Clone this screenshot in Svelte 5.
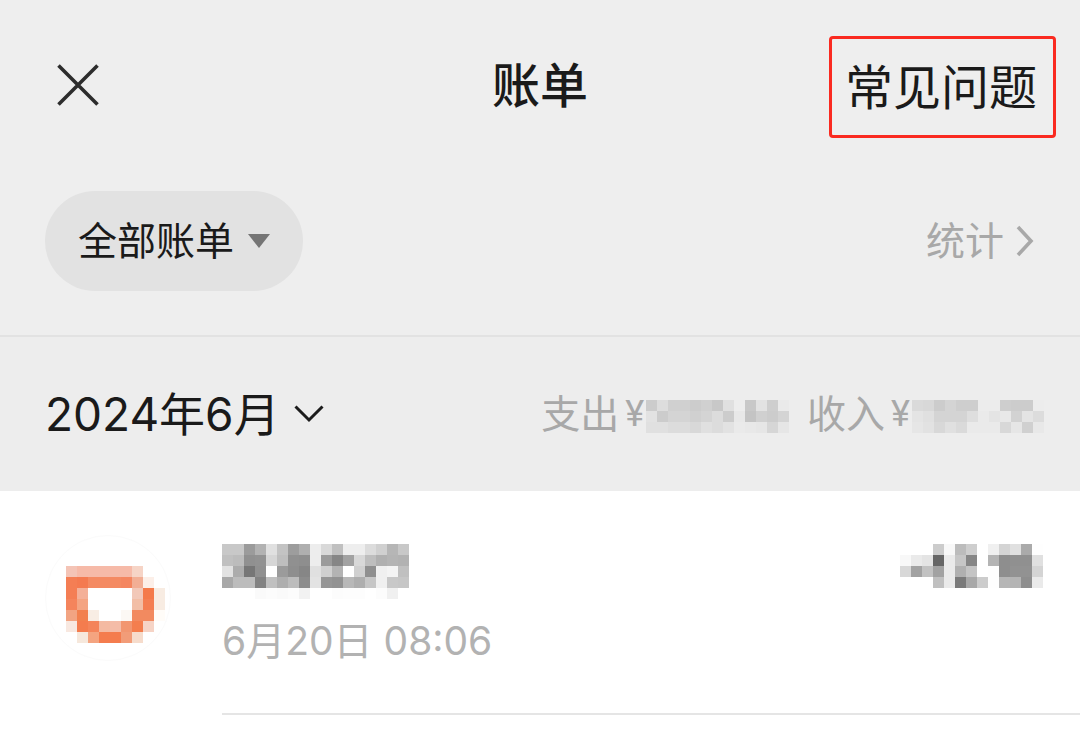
<script>
	let filter = 'all';
	let month = '2024-06';

	const CELL = 11;

	// masked values, one colour per cell, "." is an empty cell
	const expense = [
		'ccc ddd d0d0d0 d0d0d0 ccc d0d0d0 c8c8c8 e0e0e0 . c8c8c8 e2e2e2 cecece eaeaea',
		'e2e2e2 ccc d4d4d4 d4d4d4 d0d0d0 d4d4d4 dcdcdc ccc e8e8e8 c4c4c4 d0d0d0 ccc d4d4d4',
		'e0e0e0 e0e0e0 dcdcdc dcdcdc d8d8d8 e0e0e0 dcdcdc e2e2e2 eaeaea e8e8e8 e6e6e6 d6d6d6 e6e6e6'
	];
	const income = [
		'dadada d8d8d8 ccc d4d4d4 cecece cecece ececec ececec cecece ccc ccc ececec',
		'e4e4e4 e0e0e0 d4d4d4 d4d4d4 d4d4d4 dedede eaeaea e4e4e4 e8e8e8 d2d2d2 e4e4e4 dcdcdc',
		'e6e6e6 e2e2e2 d8d8d8 e0e0e0 dadada eaeaea eaeaea eaeaea d8d8d8 e6e6e6 d0d0d0 e8e8e8'
	];
	const payee = [
		'c8c8c8 c8c8c8 9b9b9b b2b2b2 e0e0e0 c3c3c3 9d9d9d afafaf ededed d9d9d9 c0c0c0 eee eee dcdcdc d0d0d0 b6b6b6 c8c8c8',
		'c0c0c0 bcbcbc 909090 929292 d6d6d6 bebebe 909090 8e8e8e ededed 9b9b9b 868686 a2a2a2 d8d8d8 bebebe b0b0b0 b4b4b4 b2b2b2',
		'e2e2e2 acacac 767676 909090 . 9b9b9b 8e8e8e 868686 e0e0e0 d0d0d0 b3b3b3 . d0d0d0 8f8f8f f0f0f0 f4f4f4 c0c0c0',
		'a8a8a8 bcbcbc bcbcbc 828282 c0c0c0 aeaeae bcbcbc 8c8c8c e3e3e3 969696 929292 b8b8b8 aeaeae c6c6c6 f0f0f0 c8c8c8 c6c6c6',
		'. . . fafafa fcfcfc fafafa fcfcfc f2f2f2 . . fcfcfc fdfdfd fdfdfd . fcfcfc f0f0f0 .'
	];
	const amount = [
		'. . . ccc f8f8f8 bcbcbc cecece . f0f0f0 d4d4d4 e0e0e0 aaa fefefe',
		'f8f8f8 eaeaea e4e4e4 666 eaeaea c6c6c6 868686 . b4b4b4 8e8e8e 909090 909090 e0e0e0',
		'd8d8d8 a2a2a2 c2c2c2 a2a2a2 eaeaea b0b0b0 c4c4c4 . fefefe 8e8e8e 929292 929292 d4d4d4',
		'. . . c0c0c0 eaeaea 7a7a7a a8a8a8 ccc fefefe b6b6b6 b4b4b4 8e8e8e eaeaea'
	];
	const logo = [
		'f4c4b6 f6baa8 f6baa8 f6baa8 f6baa8 f6baa8 f6d4c6 . .',
		'f47e54 f47a50 f48a62 f48a62 f48a62 f48660 f2ae94 fcefe8 .',
		'f47e54 f4b098 . . . . f2c8b8 f47a4a f8ece2',
		'f4845c f4a482 . . . . f2bea6 f47e52 f8ece2',
		'f2a482 f2804e f8ede4 . . fcf8f4 f28a60 f28a60 fffcf8',
		'f8e8e0 f47c4e f4845a f4baa2 f4bca8 f29670 f47e4e f6d4c6 .',
		'. f6e8dc f4a480 f47c4e f47c4e f29c78 f6dccc . .'
	];

	function toCells(rows) {
		return rows.flatMap((row, y) =>
			row
				.split(' ')
				.map((color, x) => ({ x: x * CELL, y: y * CELL, color }))
				.filter((cell) => cell.color !== '.')
		);
	}

	function width(rows) {
		return rows[0].split(' ').length * CELL;
	}
</script>

{#snippet mosaic(rows)}
	<svg class="mosaic" width={width(rows)} height={rows.length * CELL} aria-hidden="true">
		{#each toCells(rows) as cell}
			<rect x={cell.x} y={cell.y} width={CELL} height={CELL} fill="#{cell.color}" />
		{/each}
	</svg>
{/snippet}

<div class="page">
	<div class="top">
		<header class="nav">
			<button class="close" aria-label="关闭">
				<svg width="42" height="42" viewBox="0 0 42 42">
					<path d="M1.5 1.5 40.5 40.5M40.5 1.5 1.5 40.5" fill="none" stroke="#2c2c2c" stroke-width="3.6" />
				</svg>
			</button>
			<h1>账单</h1>
			<a class="faq" href="#faq">常见问题</a>
		</header>

		<div class="filters">
			<div class="picker">
				<select class="type" bind:value={filter} aria-label="账单类型">
					<option value="all">全部账单</option>
				</select>
				<svg class="caret" width="22" height="14" viewBox="0 0 22 14">
					<path d="M0 0H22L11 14Z" fill="#757575" />
				</svg>
			</div>
			<a class="stats" href="#stats">
				<span class="label">统计</span>
				<svg width="18" height="32" viewBox="0 0 18 32">
					<path d="M2 2 15 16 2 30" fill="none" stroke="#a8a8a8" stroke-width="3.6" />
				</svg>
			</a>
		</div>
	</div>

	<div class="summary">
		<div class="picker">
			<select class="month" bind:value={month} aria-label="月份">
				<option value="2024-06">2024年6月</option>
			</select>
			<svg class="chevron" width="30" height="18" viewBox="0 0 30 18">
				<path d="M1.5 1.5 15 15 28.5 1.5" fill="none" stroke="#1c1c1c" stroke-width="3" />
			</svg>
		</div>
		<div class="totals">
			<span class="total"><span class="label">支出</span><span class="yen">¥</span>{@render mosaic(expense)}</span>
			<span class="total"><span class="label">收入</span><span class="yen">¥</span>{@render mosaic(income)}</span>
		</div>
	</div>

	<ul class="bills">
		<li class="bill">
			<div class="logo">{@render mosaic(logo)}</div>
			<div class="detail">
				<div class="line">
					{@render mosaic(payee)}
					{@render mosaic(amount)}
				</div>
				<time datetime="2024-06-20T08:06">6月20日 08:06</time>
			</div>
		</li>
	</ul>
</div>

<style>
	:global(body) {
		background: #fff;
	}
	.page {
		font-family: Roboto, 'Noto Sans CJK SC', sans-serif;
		color: #1a1a1a;
	}
	svg {
		display: block;
		flex: none;
	}
	a {
		color: inherit;
		text-decoration: none;
	}
	button,
	select {
		appearance: none;
		margin: 0;
		padding: 0;
		border: none;
		background: none;
		font-family: inherit;
		color: inherit;
		cursor: pointer;
	}
	.top {
		padding: 36px 24px 44px;
		background: #eee;
		border-bottom: 2px solid #e2e2e2;
	}
	.nav {
		display: grid;
		grid-template-columns: 1fr auto 1fr;
		align-items: center;
	}
	.close {
		justify-self: start;
		margin: 0 0 4px 33px;
	}
	h1 {
		margin: 0;
		font-size: 48px;
		font-weight: 500;
		line-height: 72px;
	}
	.faq {
		justify-self: end;
		padding: 14px 16px 10px 13px;
		border: 3px solid #fa2a20;
		border-radius: 4px;
		font-size: 48px;
		line-height: 72px;
	}
	.filters {
		display: flex;
		justify-content: space-between;
		align-items: center;
		margin-top: 53px;
		padding: 0 22px 0 21px;
	}
	.picker {
		display: grid;
		align-items: center;
	}
	.picker select,
	.picker svg {
		grid-area: 1 / 1;
	}
	.picker svg {
		justify-self: end;
		pointer-events: none;
	}
	.type {
		height: 100px;
		padding: 2px 68px 0 33px;
		border-radius: 50px;
		background: #e2e2e2;
		font-size: 39px;
	}
	.caret {
		margin-right: 33px;
	}
	.label {
		padding-bottom: 6px;
	}
	.stats {
		display: flex;
		align-items: center;
		gap: 12px;
		font-size: 39px;
		color: #a8a8a8;
	}
	.summary {
		display: flex;
		justify-content: space-between;
		align-items: center;
		height: 154px;
		padding: 0 36px 0 45px;
		background: #ededed;
	}
	.month {
		padding-right: 44px;
		font-family: Inter, 'Noto Sans CJK SC', sans-serif;
		font-size: 46px;
		line-height: 72px;
	}
	.totals {
		display: flex;
		gap: 18px;
	}
	.total {
		display: flex;
		align-items: center;
		font-size: 39px;
		color: #a8a8a8;
	}
	.total :global(.mosaic) {
		margin-top: 4px;
	}
	.yen {
		margin: 0 2px 0 6px;
		font-size: 36px;
	}
	.bills {
		margin: 0;
		padding: 0;
		list-style: none;
	}
	.bill {
		display: flex;
		gap: 51px;
		padding: 44px 0 0 45px;
	}
	.logo {
		display: flex;
		align-items: center;
		justify-content: center;
		box-sizing: border-box;
		width: 126px;
		height: 126px;
		padding: 12px 0 0 14px;
		border: 1px solid #fbfbfb;
		border-radius: 50%;
	}
	.detail {
		flex: 1;
		padding: 9px 0 42px;
		border-bottom: 2px solid #e5e5e5;
	}
	.line {
		display: flex;
		justify-content: space-between;
		padding-right: 37px;
	}
	time {
		display: block;
		margin-top: 12px;
		font-family: Inter, 'Noto Sans CJK SC', sans-serif;
		font-size: 39px;
		line-height: 60px;
		color: #b2b2b2;
	}
	.mosaic {
		shape-rendering: crispEdges;
	}
</style>
